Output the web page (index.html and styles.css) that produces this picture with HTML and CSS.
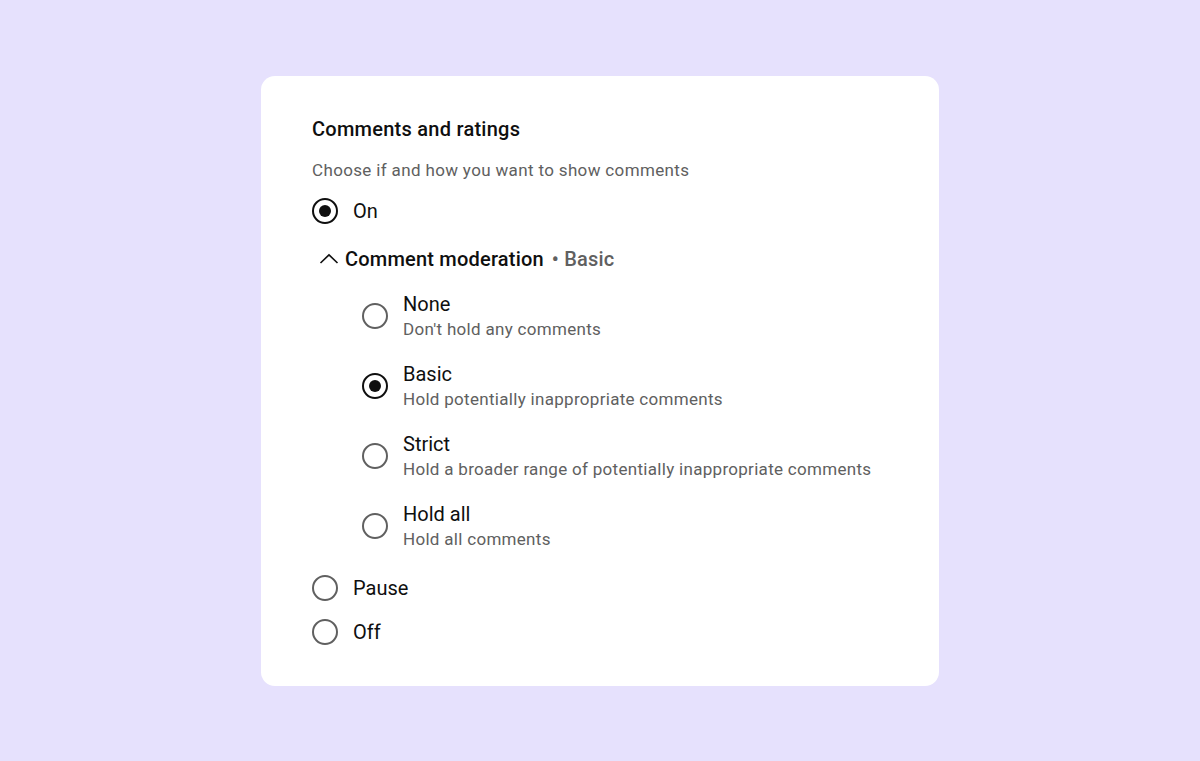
FILE: index.html
```html
<!DOCTYPE html>
<html lang="en">
<head>
    <meta charset="UTF-8">
    <meta name="viewport" content="width=device-width, initial-scale=1.0">
    <title>Comments and ratings</title>
    <link rel="stylesheet" href="styles.css">
</head>
<body>
    <div class="card">
        <h2 class="card-title">Comments and ratings</h2>
        <p class="card-subtitle">Choose if and how you want to show comments</p>

        <div class="options">
            <label class="option">
                <span class="radio checked"></span>
                <span class="option-label">On</span>
            </label>

            <div class="moderation">
                <div class="moderation-header">
                    <svg class="chevron" width="24" height="24" viewBox="0 0 24 24">
                        <path d="M3.5 16 L12 7.8 L20.5 16" fill="none" stroke="#0f0f0f" stroke-width="1.6"/>
                    </svg>
                    <span class="moderation-title">Comment moderation</span>
                    <span class="moderation-value">&bull; Basic</span>
                </div>

                <div class="sub-options">
                    <label class="sub-option">
                        <span class="radio"></span>
                        <span class="sub-text">
                            <span class="option-label">None</span>
                            <span class="option-desc">Don't hold any comments</span>
                        </span>
                    </label>
                    <label class="sub-option">
                        <span class="radio checked"></span>
                        <span class="sub-text">
                            <span class="option-label">Basic</span>
                            <span class="option-desc">Hold potentially inappropriate comments</span>
                        </span>
                    </label>
                    <label class="sub-option">
                        <span class="radio"></span>
                        <span class="sub-text">
                            <span class="option-label">Strict</span>
                            <span class="option-desc">Hold a broader range of potentially inappropriate comments</span>
                        </span>
                    </label>
                    <label class="sub-option">
                        <span class="radio"></span>
                        <span class="sub-text">
                            <span class="option-label">Hold all</span>
                            <span class="option-desc">Hold all comments</span>
                        </span>
                    </label>
                </div>
            </div>

            <label class="option pause">
                <span class="radio"></span>
                <span class="option-label">Pause</span>
            </label>
            <label class="option">
                <span class="radio"></span>
                <span class="option-label">Off</span>
            </label>
        </div>
    </div>
</body>
</html>
```

FILE: styles.css
```css
html, body {
    height: 100%;
}
body {
    margin: 0;
    background: #e6e1fd;
    font-family: Roboto, "Liberation Sans", Arial, sans-serif;
    color: #0f0f0f;
    display: flex;
    align-items: center;
    justify-content: center;
}
.card {
    width: 678px;
    height: 610px;
    box-sizing: border-box;
    background: #ffffff;
    border-radius: 14px;
    padding: 40px 51px 32px;
}
.card-title {
    margin: 0;
    font-size: 20px;
    font-weight: 500;
    line-height: 26px;
    letter-spacing: 0.25px;
}
.card-subtitle {
    margin: 15px 0 0;
    font-size: 17px;
    line-height: 26px;
    letter-spacing: 0.35px;
    color: #606060;
}
.options {
    margin-top: 6px;
    display: flex;
    flex-direction: column;
}
.option {
    height: 44px;
    display: flex;
    align-items: center;
    gap: 15px;
}
.option.pause {
    margin-top: 15px;
}
.option-label {
    font-size: 20px;
    line-height: 26px;
}
.radio {
    width: 26px;
    height: 26px;
    box-sizing: border-box;
    border: 2.4px solid #606060;
    border-radius: 50%;
    flex-shrink: 0;
    display: flex;
    align-items: center;
    justify-content: center;
}
.radio.checked {
    border-color: #0f0f0f;
    border-width: 2.6px;
}
.radio.checked::after {
    content: "";
    width: 12px;
    height: 12px;
    border-radius: 50%;
    background: #0f0f0f;
}
.moderation-header {
    margin-top: 4px;
    height: 44px;
    display: flex;
    align-items: center;
    padding-left: 5px;
    font-size: 20px;
    font-weight: 500;
    letter-spacing: 0.2px;
}
.chevron {
    margin-right: 4px;
}
.moderation-value {
    margin-left: 8px;
    color: #606060;
}
.sub-options {
    margin-top: 10px;
    padding-left: 50px;
    display: flex;
    flex-direction: column;
    gap: 20px;
}
.sub-option {
    display: flex;
    align-items: center;
    gap: 15px;
}
.sub-text {
    display: flex;
    flex-direction: column;
}
.option-desc {
    font-size: 17px;
    line-height: 24px;
    letter-spacing: 0.3px;
    color: #606060;
}
```
